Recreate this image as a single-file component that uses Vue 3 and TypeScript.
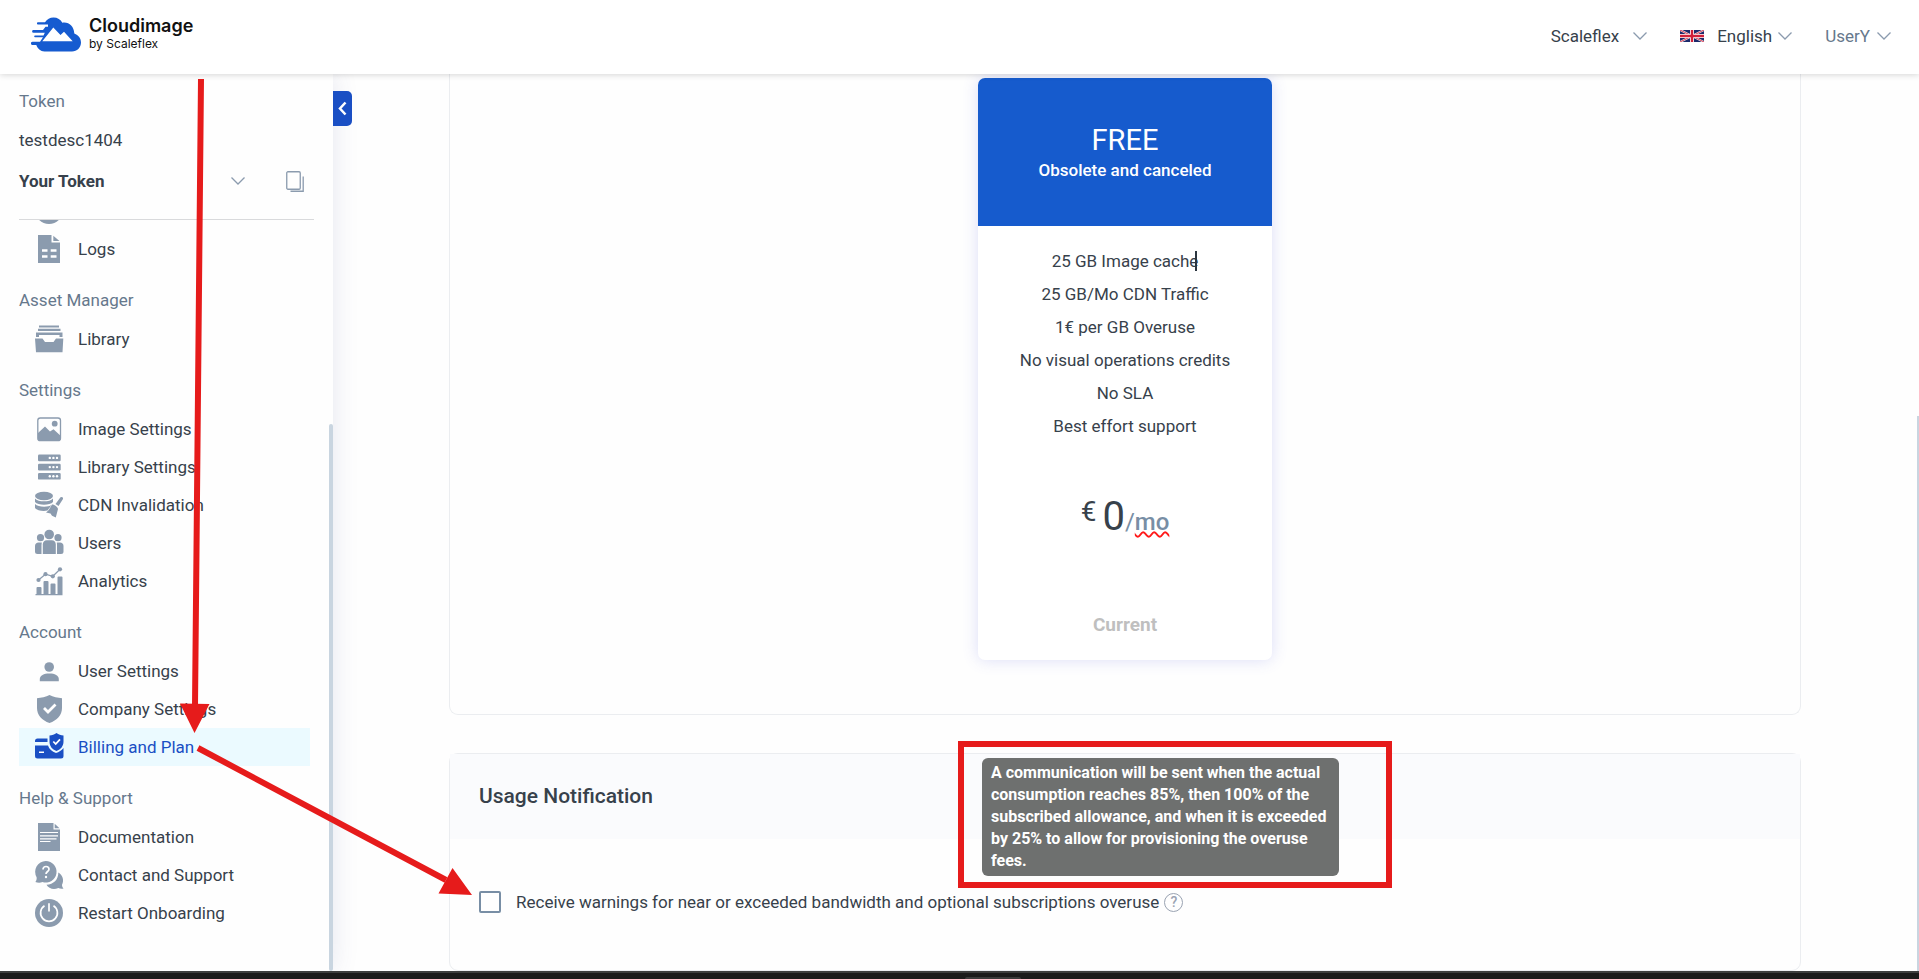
<script setup lang="ts">
import { ref } from 'vue'

type IconName =
  | 'logs' | 'library' | 'image' | 'server' | 'cdn' | 'users' | 'analytics'
  | 'user' | 'shield' | 'billing' | 'doc' | 'contact' | 'power'

interface NavItem { label: string; icon: IconName; active?: boolean }
interface NavGroup { title?: string; items: NavItem[] }

const groups: NavGroup[] = [
  { items: [{ label: 'Logs', icon: 'logs' }] },
  { title: 'Asset Manager', items: [{ label: 'Library', icon: 'library' }] },
  {
    title: 'Settings',
    items: [
      { label: 'Image Settings', icon: 'image' },
      { label: 'Library Settings', icon: 'server' },
      { label: 'CDN Invalidation', icon: 'cdn' },
      { label: 'Users', icon: 'users' },
      { label: 'Analytics', icon: 'analytics' },
    ],
  },
  {
    title: 'Account',
    items: [
      { label: 'User Settings', icon: 'user' },
      { label: 'Company Settings', icon: 'shield' },
      { label: 'Billing and Plan', icon: 'billing', active: true },
    ],
  },
  {
    title: 'Help & Support',
    items: [
      { label: 'Documentation', icon: 'doc' },
      { label: 'Contact and Support', icon: 'contact' },
      { label: 'Restart Onboarding', icon: 'power' },
    ],
  },
]

const features: string[] = [
  '25 GB Image cache',
  '25 GB/Mo CDN Traffic',
  '1€ per GB Overuse',
  'No visual operations credits',
  'No SLA',
  'Best effort support',
]

const warnings = ref(false)
</script>

<template>
  <div class="page">
    <header class="topbar">
      <a class="brand" href="#">
        <svg class="cloud" viewBox="0 0 50 35" aria-hidden="true">
          <path fill="#165bd0" d="M13.500 34.500C9.500 34.500 6.500 31.500 5.300 28H1.500a1.600 1.600 0 0 1 0-3.200H9L12 20.200H4a.8.8 0 0 1 0-1.600H12.500L13.800 15.800H2.500a1.400 1.400 0 0 1 0-2.800H12L14.500 9.800H17V7.500H7a1.100 1.100 0 0 1 0-2.200H14C16 2.200 19 .4 22.500.4c4 0 7.200 2 8.800 5.300C37.500 4.500 43 9 43.300 16.500 47.500 18 50 21.500 50 25.500c0 5-4 9-9 9z" />
          <path fill="#fff" d="M11.300 24.300 22.300 10.500 29.500 18 33 14.800 41.700 24.300z" />
        </svg>
        <span class="brand-text">
          <span class="brand-name">Cloudimage</span>
          <span class="brand-sub">by Scaleflex</span>
        </span>
      </a>
      <div class="top-actions">
        <button type="button" class="top-btn company">
          Scaleflex
          <svg class="chev" viewBox="0 0 14 8" aria-hidden="true"><path d="M.5.5 7 7 13.500.5" /></svg>
        </button>
        <button type="button" class="top-btn lang">
          <svg class="flag" viewBox="0 0 24 12" aria-hidden="true">
            <rect width="24" height="12" fill="#1c2a6b" />
            <path d="M0 0 24 12M24 0 0 12" stroke="#fff" stroke-width="2" />
            <path d="M0 0 24 12M24 0 0 12" stroke="#d0203a" stroke-width=".9" />
            <path d="M12 0V12M0 6H24" stroke="#fff" stroke-width="4" />
            <path d="M12 0V12M0 6H24" stroke="#d0203a" stroke-width="2.400" />
          </svg>
          <span class="lang-name">English</span>
          <svg class="chev" viewBox="0 0 14 8" aria-hidden="true"><path d="M.5.5 7 7 13.500.5" /></svg>
        </button>
        <button type="button" class="top-btn account">
          UserY
          <svg class="chev" viewBox="0 0 14 8" aria-hidden="true"><path d="M.5.5 7 7 13.500.5" /></svg>
        </button>
      </div>
    </header>

    <div class="body">
      <aside class="sidebar">
        <section class="token">
          <div class="token-title">Token</div>
          <div class="token-value">testdesc1404</div>
          <div class="token-row">
            <button type="button" class="token-select">
              Your Token
              <svg class="chev" viewBox="0 0 14 8" aria-hidden="true"><path d="M.5.5 7 7 13.500.5" /></svg>
            </button>
            <button type="button" class="copy" aria-label="Copy">
              <svg viewBox="0 0 18 21" aria-hidden="true">
                <rect x=".75" y=".75" width="13.500" height="17.500" rx="1.200" />
                <path d="M4.500 20.250h12.700V5.500" />
              </svg>
            </button>
          </div>
        </section>

        <nav class="nav">
          <div class="clipped">
            <svg viewBox="0 0 28 28" aria-hidden="true"><circle cx="14" cy="14" r="14" /></svg>
          </div>
          <div v-for="(group, gi) in groups" :key="gi" class="group">
            <div v-if="group.title" class="group-title">{{ group.title }}</div>
            <a
              v-for="item in group.items"
              :key="item.label"
              href="#"
              class="item"
              :class="{ active: item.active }"
            >
              <svg class="icon" viewBox="0 0 28 28" aria-hidden="true">
                <template v-if="item.icon === 'logs'">
                  <path d="M3 0H16.500V7.500H25V28H3z" />
                  <path d="M18.300.7 24.500 6H18.300z" />
                  <path fill="#fff" d="M7 14.200h5.500v2.500H7zM15.700 14.200h5.800v2.500h-5.800zM7 20.200h5.500v2.500H7zM15.700 20.200h5.800v2.500h-5.800z" />
                </template>
                <template v-else-if="item.icon === 'library'">
                  <path d="M4 .5H24V2.500H4zM3 3.700H25.500V6H3z" />
                  <path d="M1 7.500H27.500V12H24.500V10H4V12H1z" />
                  <path d="M0 13.500H7.500L10 17H18.500L21 13.500H28.300L27.500 27.200H1z" />
                </template>
                <template v-else-if="item.icon === 'image'">
                  <rect x="2.800" y="3" width="22.700" height="22.700" rx="2.500" fill="none" stroke="currentColor" stroke-width="1.300" />
                  <path d="M3 18 10 11.500 15 16.500 18.500 14.300 25.300 20.500V24a2 2 0 0 1-2 2H5a2 2 0 0 1-2-2z" />
                  <circle cx="19.700" cy="8.700" r="2.900" />
                </template>
                <template v-else-if="item.icon === 'server'">
                  <rect x="3" y="1.500" width="22.700" height="6.700" rx="1.200" />
                  <rect x="3" y="10.700" width="22.700" height="6.700" rx="1.200" />
                  <rect x="3" y="19.900" width="22.700" height="6.700" rx="1.200" />
                  <g fill="#fff">
                    <circle v-for="n in 9" :key="n" :cx="14.800 + ((n - 1) % 3) * 3.600" :cy="4.900 + Math.floor((n - 1) / 3) * 9.200" r="1.200" />
                  </g>
                </template>
                <template v-else-if="item.icon === 'cdn'">
                  <ellipse cx="9" cy="5" rx="9" ry="4.200" />
                  <path d="M0 7.500C3 11.300 15 11.300 18 7.500V11C15 14.500 3 14.500 0 11z" />
                  <path d="M0 13C3 16.300 13 16.500 16.500 14L12.500 19.500C8 20.500 2 19.500 0 17z" />
                  <path d="M25.500 6.300a1.600 1.600 0 0 1 2.500 1.800L23.500 15 20.500 13z" />
                  <path d="M17 13.500C19 13.500 22.500 15.500 23 18L20.800 26.500 17 24.800 15.500 22.500 11 21.500C14 19.500 15.500 16 17 13.500z" />
                </template>
                <template v-else-if="item.icon === 'users'">
                  <circle cx="14.200" cy="5.500" r="4.800" />
                  <circle cx="5.500" cy="8.700" r="3.600" />
                  <circle cx="23" cy="8.700" r="3.600" />
                  <path d="M7.800 25V15.500c0-2.500 1.500-4.200 4-4.200h5c2.500 0 4 1.700 4 4.200V25z" />
                  <path d="M0 22.500V17c0-2 1.500-3.500 3.500-3.500H6.800L6.500 16V25H2.500A2.500 2.500 0 0 1 0 22.500zM28.500 22.500V17c0-2-1.500-3.500-3.500-3.500H21.800L22 16V25h4a2.500 2.500 0 0 0 2.500-2.500z" />
                </template>
                <template v-else-if="item.icon === 'analytics'">
                  <path d="M.5 27H27.500V28.200H.5zM1.500 21a1 1 0 0 1 1-1h3a1 1 0 0 1 1 1v6h-5zM8.500 15a1 1 0 0 1 1-1h3a1 1 0 0 1 1 1v12h-5zM15.500 17.500a1 1 0 0 1 1-1h3a1 1 0 0 1 1 1V27h-5zM22.500 10.500a1 1 0 0 1 1-1h3a1 1 0 0 1 1 1V27h-5z" />
                  <path d="M3.500 13 10.500 7.200 17.800 9.300 25 2.300" fill="none" stroke="currentColor" stroke-width="1.200" />
                  <circle cx="3.500" cy="13" r="2.100" /><circle cx="10.500" cy="7.200" r="2.100" />
                  <circle cx="17.800" cy="9.300" r="2.100" /><circle cx="25" cy="2.300" r="2.100" />
                </template>
                <template v-else-if="item.icon === 'user'">
                  <circle cx="14.200" cy="10" r="4.800" />
                  <path d="M4.800 24.300V22c0-3.500 4-5.500 9.500-5.500s9.500 2 9.500 5.500v2.300z" />
                </template>
                <template v-else-if="item.icon === 'shield'">
                  <path d="M14.500 0C18 1.800 23 3 27 3.200V13c0 7-5 12.500-12.500 15C7 25.500 2 20 2 13V3.200C6 3 11 1.800 14.500 0z" />
                  <path d="M9 13 13 17 20.500 9.500" fill="none" stroke="#fff" stroke-width="2.800" />
                </template>
                <template v-else-if="item.icon === 'billing'">
                  <path d="M0 9V8A2.500 2.500 0 0 1 2.500 5.500H12.500V9zM0 12.500H13C14 16 17 18.500 21 20 24 19 26.500 17.500 28.500 15V23A2.500 2.500 0 0 1 26 25.500H2.500A2.500 2.500 0 0 1 0 23z" />
                  <path d="M4 18.500H9V20H4z" fill="#fff" />
                  <path d="M21.500 0C23.500 1.500 26 2.200 28.500 2.400V8.500C28.500 13 25.800 16.500 21.500 18 17.200 16.500 14.500 13 14.500 8.500V2.400C17 2.200 19.500 1.500 21.500 0z" />
                  <path d="M18.300 8.500 20.700 11 25 6.300" fill="none" stroke="#fff" stroke-width="1.800" />
                </template>
                <template v-else-if="item.icon === 'doc'">
                  <path d="M3 0H18.500V6.500H25V28H3z" />
                  <path d="M19.700.7 24.500 5.300H19.700z" />
                  <path d="M5 9.500H23M5 12.800H23M5 15.800H21.500M5 18.500H15.500" stroke="#fff" stroke-width="1.200" />
                </template>
                <template v-else-if="item.icon === 'contact'">
                  <path d="M10.800 0a10.800 10.800 0 1 1-3.300 21.100C5 22 2.500 21.800.3 21 1.500 19.500 1.900 17.800 1.600 16.200A10.800 10.800 0 0 1 10.800 0z" />
                  <path d="M23.300 11.500C27.500 14 29.500 19 27 23.700 27 25.300 27.500 26.500 28.500 27.500 26.800 28 25 27.800 23.300 27 18.500 29 13.500 27.500 11.500 23.700 18.500 23.500 23.500 18.500 23.300 11.500z" />
                  <path d="M8 8.500C8 6.500 9.200 5.500 11 5.500s3 1.200 3 2.800c0 2.200-3 2.200-3 4.700" fill="none" stroke="#fff" stroke-width="1.700" />
                  <circle cx="11" cy="16" r="1.200" fill="#fff" />
                </template>
                <template v-else>
                  <circle cx="14" cy="14" r="14" />
                  <path d="M9.500 6.800A8.400 8.400 0 1 0 18.500 6.800M14 4.200V12.500" fill="none" stroke="#fff" stroke-width="1.700" />
                </template>
              </svg>
              <span>{{ item.label }}</span>
            </a>
          </div>
        </nav>
        <span class="side-thumb"></span>
        <button type="button" class="collapse" aria-label="Collapse sidebar">
          <svg viewBox="0 0 9 15" aria-hidden="true"><path d="M7.500 1.500 2 7.500 7.500 13.500" /></svg>
        </button>
      </aside>

      <main class="main">
        <section class="panel plans">
          <article class="plan">
            <div class="plan-head">
              <h2>FREE</h2>
              <p>Obsolete and canceled</p>
            </div>
            <ul class="features">
              <li v-for="(feature, i) in features" :key="feature">
                <span class="feature">{{ feature }}<i v-if="i === 0" class="caret"></i></span>
              </li>
            </ul>
            <div class="price">
              <span class="currency">€</span>
              <span class="amount">0</span>
              <span class="period">/<span class="mo">mo</span></span>
            </div>
            <button type="button" class="current" disabled>Current</button>
          </article>
        </section>

        <section class="panel usage">
          <h3>Usage Notification</h3>
          <div class="usage-row">
            <input id="warnings" v-model="warnings" type="checkbox" />
            <label for="warnings">Receive warnings for near or exceeded bandwidth and optional subscriptions overuse</label>
            <button type="button" class="help" aria-describedby="usage-tip">?</button>
          </div>
        </section>
        <span class="main-thumb"></span>
      </main>
    </div>

    <footer class="dock"><span></span></footer>

    <div class="highlight">
      <div id="usage-tip" class="tooltip" role="tooltip">
        A communication will be sent when the actual consumption reaches 85%, then 100% of the subscribed allowance, and when it is exceeded by 25% to allow for provisioning the overuse fees.
      </div>
    </div>
    <svg class="arrows" width="480" height="900" aria-hidden="true">
      <path d="M201 79 195 706M198 748 446 880" />
      <path class="head" d="M180 703.500 209.500 704 194.500 733zM452.500 868 438.500 893.500 472 895z" />
    </svg>
  </div>
</template>

<style>
body {
  margin: 0;
}
</style>

<style scoped>
.page {
  position: relative;
  display: flex;
  flex-direction: column;
  height: 100vh;
  overflow: hidden;
  background: #fefefe;
  color: #37414b;
  font: 17px/24px Roboto, "Liberation Sans", sans-serif;
}
.page * {
  box-sizing: border-box;
}
button {
  margin: 0;
  padding: 0;
  border: 0;
  background: none;
  color: inherit;
  font: inherit;
}
a {
  color: inherit;
  text-decoration: none;
}
.topbar {
  position: relative;
  z-index: 3;
  display: flex;
  align-items: center;
  justify-content: space-between;
  flex: none;
  height: 74px;
  padding: 0 28px 2px 31px;
  background: #fff;
  box-shadow: 0 1px 6px rgba(0, 0, 0, 0.16);
}
.brand {
  display: flex;
  align-items: center;
  gap: 8px;
  padding-bottom: 4px;
}
.cloud {
  width: 50px;
  height: 35px;
}
.brand-text {
  display: flex;
  flex-direction: column;
  color: #111;
  font-family: Inter, sans-serif;
}
.brand-name {
  font-size: 18px;
  font-weight: 600;
  line-height: 20px;
}
.brand-sub {
  font-size: 12px;
  line-height: 16px;
}
.top-actions,
.top-btn {
  display: flex;
  align-items: center;
}
.top-actions {
  gap: 33px;
}
.company {
  gap: 14px;
}
.lang {
  gap: 6px;
}
.lang-name {
  padding-left: 7px;
}
.account {
  gap: 7px;
  color: #66788c;
}
.flag {
  width: 24px;
  height: 12px;
}
.chev {
  width: 14px;
  height: 8px;
  fill: none;
  stroke: #8b9bae;
  stroke-width: 1.3;
}
.body {
  display: flex;
  flex: 1;
  min-height: 0;
}
.sidebar {
  position: relative;
  z-index: 2;
  display: flex;
  flex-direction: column;
  flex: none;
  width: 333px;
  background: #fefefe;
  box-shadow: 0 0 24px rgba(60, 70, 140, 0.13);
}
.token {
  flex: none;
  margin: 0 19px;
  padding: 15px 0 26px;
  border-bottom: 1px solid #d9dadc;
}
.token-title {
  color: #66788c;
}
.token-value {
  padding-top: 15px;
}
.token-row {
  display: flex;
  align-items: center;
  justify-content: space-between;
  padding: 17px 10px 0 0;
}
.token-select {
  display: flex;
  align-items: center;
  justify-content: space-between;
  width: 226px;
  font-weight: 700;
}
.copy {
  display: flex;
}
.copy svg {
  width: 18px;
  height: 21px;
  fill: none;
  stroke: #8b9bae;
  stroke-width: 1.3;
}
.nav {
  flex: 1;
  min-height: 0;
  padding: 0 23px 0 19px;
  overflow: hidden;
}
.clipped {
  display: flex;
  align-items: flex-end;
  height: 10px;
  padding: 0 0 6px 16px;
  overflow: hidden;
}
.clipped svg {
  flex: none;
  width: 28px;
  height: 28px;
  fill: #8b9bae;
}
.group-title {
  margin-top: 13px;
  color: #66788c;
  line-height: 39px;
}
.item {
  display: flex;
  align-items: center;
  gap: 15px;
  height: 38px;
  padding-left: 16px;
}
.item.active {
  background: #ebfaff;
  color: #1a4fc4;
}
.icon {
  flex: none;
  width: 28px;
  height: 28px;
  overflow: visible;
  fill: currentColor;
  color: #8b9bae;
}
.active .icon {
  color: #1a4fc4;
}
.side-thumb {
  position: absolute;
  top: 350px;
  right: 0;
  bottom: 0;
  width: 4px;
  border-radius: 2px;
  background: #c9d5e0;
}
.collapse {
  position: absolute;
  top: 17px;
  left: 100%;
  display: flex;
  align-items: center;
  justify-content: center;
  width: 19px;
  height: 35px;
  border-radius: 0 5px 5px 0;
  background: #1a4fc4;
}
.collapse svg {
  width: 9px;
  height: 15px;
  fill: none;
  stroke: #fff;
  stroke-width: 2.5;
}
.main {
  position: relative;
  flex: 1;
  min-width: 0;
  padding: 0 118px 0 116px;
}
.panel {
  border: 1px solid #ebedf0;
  border-radius: 9px;
}
.plans {
  display: flex;
  justify-content: center;
  padding: 4px 0 54px;
  border-top: 0;
  border-radius: 0 0 9px 9px;
}
.plan {
  display: flex;
  flex-direction: column;
  align-items: center;
  width: 294px;
  height: 582px;
  border-radius: 7px;
  background: #fff;
  box-shadow: 0 0 16px rgba(80, 90, 220, 0.2);
}
.plan-head {
  align-self: stretch;
  height: 148px;
  padding-top: 44px;
  border-radius: 7px 7px 0 0;
  background: #165bcd;
  color: #fff;
  text-align: center;
}
h2,
h3,
p,
ul {
  margin: 0;
  padding: 0;
  font-weight: 400;
}
h2 {
  font-size: 29px;
  line-height: 36px;
}
.plan-head p {
  font-weight: 500;
}
.features {
  padding-top: 19px;
  list-style: none;
  text-align: center;
}
.features li {
  line-height: 33px;
}
.feature {
  position: relative;
}
.caret {
  position: absolute;
  top: 0;
  right: 1px;
  width: 2px;
  height: 20px;
  background: #2b353f;
}
.price {
  display: flex;
  align-items: baseline;
  padding-top: 45px;
}
.currency {
  align-self: flex-start;
  padding-right: 6px;
  font-size: 28px;
  line-height: 48px;
}
.amount {
  font-size: 40px;
  line-height: 58px;
}
.period {
  color: #788ea5;
  font-size: 24px;
}
.mo {
  font-weight: 500;
  text-decoration: underline wavy #ff1a1a 2px;
  text-decoration-skip-ink: none;
}
.current {
  margin-top: 67px;
  color: #bfbfbf;
  font-size: 19px;
  font-weight: 700;
}
.usage {
  margin-top: 38px;
  padding-bottom: 56px;
}
h3 {
  padding: 0 29px;
  background: #fafbfd;
  font-size: 21px;
  font-weight: 500;
  line-height: 85px;
}
.usage-row {
  display: flex;
  align-items: center;
  padding: 51px 29px 0;
}
input {
  appearance: none;
  width: 22px;
  height: 22px;
  margin: 0 15px 0 0;
  border: 2px solid #788ea5;
  border-radius: 2px;
  background: #fff;
}
.help {
  width: 19px;
  height: 19px;
  margin-left: 5px;
  border: 1px solid #9aa3b2;
  border-radius: 50%;
  color: #9aa3b2;
  font-size: 14px;
  font-weight: 500;
  line-height: 17px;
}
.main-thumb {
  position: absolute;
  top: 342px;
  right: 0;
  bottom: 0;
  width: 2px;
  background: #c9d5e0;
}
.dock {
  position: relative;
  z-index: 3;
  display: flex;
  align-items: flex-end;
  justify-content: center;
  flex: none;
  height: 8px;
  padding-left: 67px;
  border-top: 2px solid #3d3e3e;
  background: #1b1b1b;
}
.dock span {
  width: 56px;
  height: 2px;
  border-radius: 2px 2px 0 0;
  background: #3a3a3a;
}
.highlight {
  position: absolute;
  z-index: 4;
  top: 741px;
  left: 958px;
  width: 434px;
  height: 147px;
  padding: 11px 18px;
  border: 6px solid #e61b1b;
}
.tooltip {
  width: 357px;
  padding: 4px 9px;
  border-radius: 6px;
  background: #6e706f;
  color: #fff;
  font-size: 16px;
  font-weight: 700;
  line-height: 22px;
}
.arrows {
  position: absolute;
  z-index: 4;
  top: 0;
  left: 0;
  fill: none;
  stroke: #e61b1b;
  stroke-width: 6;
  pointer-events: none;
}
.head {
  fill: #e61b1b;
  stroke: none;
}
</style>
